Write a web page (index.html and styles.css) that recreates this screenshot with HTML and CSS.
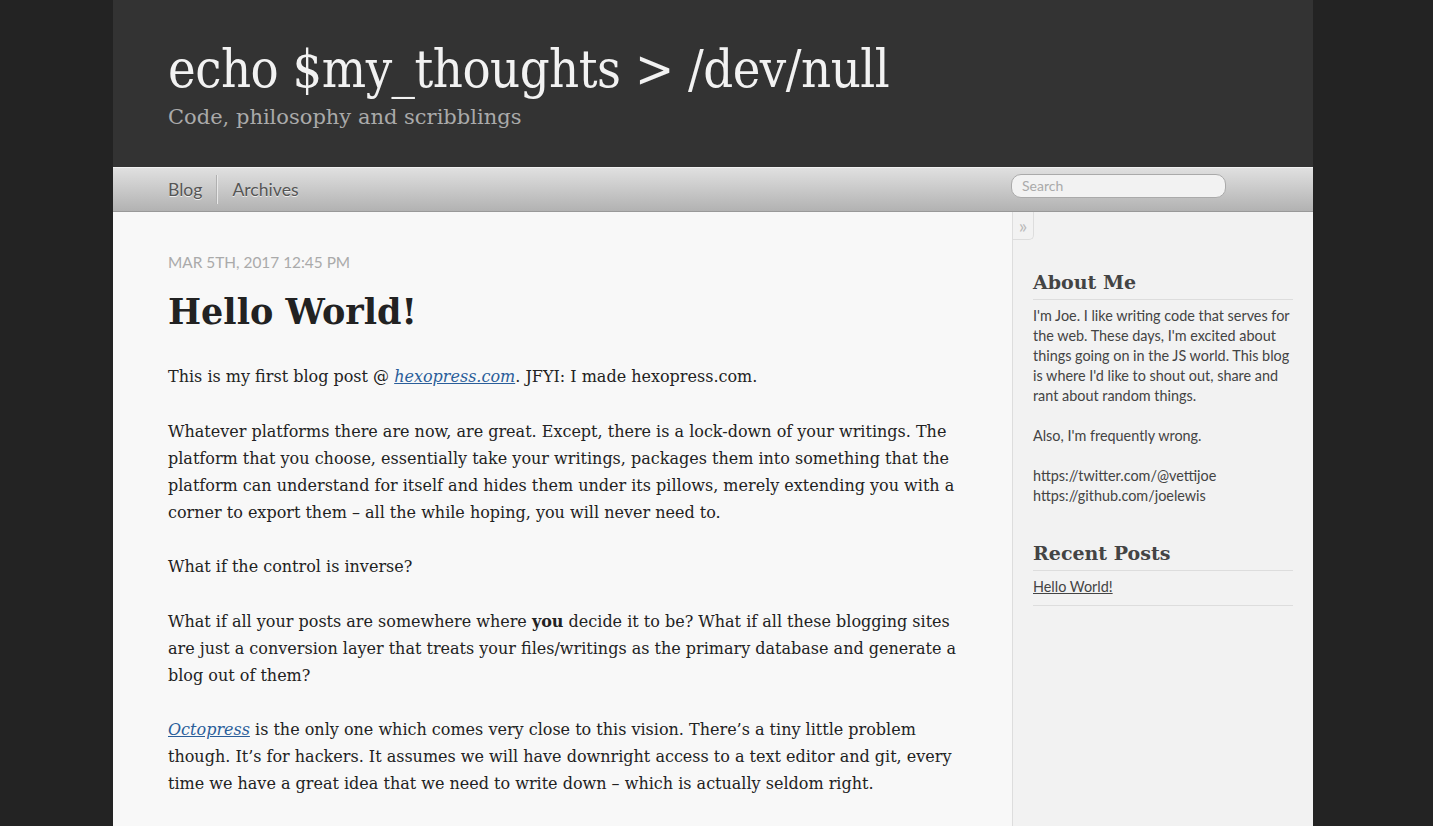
FILE: index.html
```html
<!DOCTYPE html>
<html>
<head>
  <meta charset="UTF-8">
  <title>echo $my_thoughts &gt; /dev/null</title>
  <link rel="stylesheet" href="styles.css">
</head>
<body>
<div class="page">
  <header class="site-header">
    <h1 class="site-title">echo $my_thoughts &gt; /dev/null</h1>
    <h2 class="site-subtitle">Code, philosophy and scribblings</h2>
  </header>

  <nav class="site-nav">
    <ul class="main-nav">
      <li><a href="#">Blog</a></li>
      <li><a href="#">Archives</a></li>
    </ul>
    <form class="search">
      <input type="text" placeholder="Search">
    </form>
  </nav>

  <div class="main">
    <article class="post">
      <p class="post-date">Mar 5th, 2017 12:45 pm</p>
      <h1 class="post-title">Hello World!</h1>
      <p>This is my first blog post @ <a href="#">hexopress.com</a>. JFYI: I made hexopress.com.</p>
      <p>Whatever platforms there are now, are great. Except, there is a lock-down of your writings. The platform that you choose, essentially take your writings, packages them into something that the platform can understand for itself and hides them under its pillows, merely extending you with a corner to export them – all the while hoping, you will never need to.</p>
      <p>What if the control is inverse?</p>
      <p>What if all your posts are somewhere where <b>you</b> decide it to be? What if all these blogging sites are just a conversion layer that treats your files/writings as the primary database and generate a blog out of them?</p>
      <p><a href="#">Octopress</a> is the only one which comes very close to this vision. There’s a tiny little problem though. It’s for hackers. It assumes we will have downright access to a text editor and git, every time we have a great idea that we need to write down – which is actually seldom right.</p>
    </article>

    <aside class="sidebar">
      <span class="toggle">»</span>
      <section>
        <h1>About Me</h1>
        <p>I'm Joe. I like writing code that serves for the web. These days, I'm excited about things going on in the JS world. This blog is where I'd like to shout out, share and rant about random things.</p>
        <p>Also, I'm frequently wrong.</p>
        <p>https://twitter.com/@vettijoe<br>https://github.com/joelewis</p>
      </section>
      <section>
        <h1>Recent Posts</h1>
        <ul class="recent">
          <li><a href="#">Hello World!</a></li>
        </ul>
      </section>
    </aside>
  </div>
</div>
</body>
</html>
```

FILE: styles.css
```css
body { margin: 0; background: #232323; font-family: "DejaVu Serif", serif; color: #222; }
.page { width: 1200px; margin: 0 0 0 113px; }

/* header */
.site-header { background: #333; height: 167px; padding: 0 55px; box-sizing: border-box; overflow: hidden; }
.site-title { margin: 0; padding-top: 36px; font-family: "DejaVu Serif Condensed", "DejaVu Serif", serif; font-weight: normal;
  font-size: 52px; line-height: 66px; color: #f2f2f2; letter-spacing: -0.5px; }
.site-subtitle { margin: 0; font-weight: normal; font-size: 21px; line-height: 31px; color: #aaa; }

/* nav bar */
.site-nav { display: flex; justify-content: space-between; align-items: center; height: 45px; padding: 0 55px; box-sizing: border-box;
  background: linear-gradient(#e0e0e0, #b2b2b2); border-top: 1px solid #f0f0f0; border-bottom: 1px solid #999; }
.main-nav { list-style: none; margin: 0; padding: 0; display: flex; }
.main-nav li { padding: 4px 14px 4px 15px; border-left: 1px solid #b0b0b0; box-shadow: inset 1px 0 0 #e8e8e8; }
.main-nav li:first-child { padding-left: 0; border-left: none; box-shadow: none; }
.main-nav a { font-family: "Lato", sans-serif; font-size: 17.6px; color: #555; text-decoration: none; text-shadow: 0 1px 0 #eee; }
.search { margin-right: 32px; margin-top: -8px; }
.search input { width: 215px; height: 24px; box-sizing: border-box; border: 1px solid #aaa; border-radius: 10px; background: #f2f2f2;
  padding: 0 10px; font-family: "Lato", sans-serif; font-size: 14px; color: #666; }
.search input::placeholder { color: #aaa; }

/* content */
.main { display: flex; background: #f8f8f8; min-height: 700px; }
.post { width: 899px; box-sizing: border-box; padding: 40px 55px 0; }
.post p { font-size: 16px; line-height: 27px; margin: 0 0 27.5px; }
.post a { color: #2a5e9a; font-style: italic; }
.post .post-date { font-family: "Lato", sans-serif; font-size: 15.4px; color: #aaa; text-transform: uppercase; margin: 0 0 17px; line-height: 20px; }
.post-title { margin: 0 0 28px; font-size: 35px; line-height: 46px; color: #222; }

/* sidebar */
.sidebar { position: relative; width: 301px; box-sizing: border-box; background: #f2f2f2; border-left: 1px solid #ddd; padding: 55px 20px 0; }
.toggle { position: absolute; left: -1px; top: 0; width: 20px; height: 27px; border: 1px solid #ddd; border-top: none;
  border-bottom-right-radius: 5px; background: #f2f2f2; color: #bbb; font-family: "Lato", sans-serif; font-size: 20px; line-height: 26px; text-align: center; }
.sidebar section { margin-bottom: 32px; }
.sidebar h1 { margin: 0; font-size: 19px; line-height: 30px; color: #444; border-bottom: 1px solid #ddd; padding-bottom: 2px; margin-bottom: 6px; }
.sidebar p { margin: 0 0 20px; font-family: "Lato", sans-serif; font-size: 14.4px; line-height: 20px; color: #444; }
.recent { list-style: none; margin: 0; padding: 0; }
.recent li { font-family: "Lato", sans-serif; font-size: 14.4px; line-height: 20px; padding-bottom: 8px; border-bottom: 1px solid #ddd; }
.recent a { color: #444; }
```
